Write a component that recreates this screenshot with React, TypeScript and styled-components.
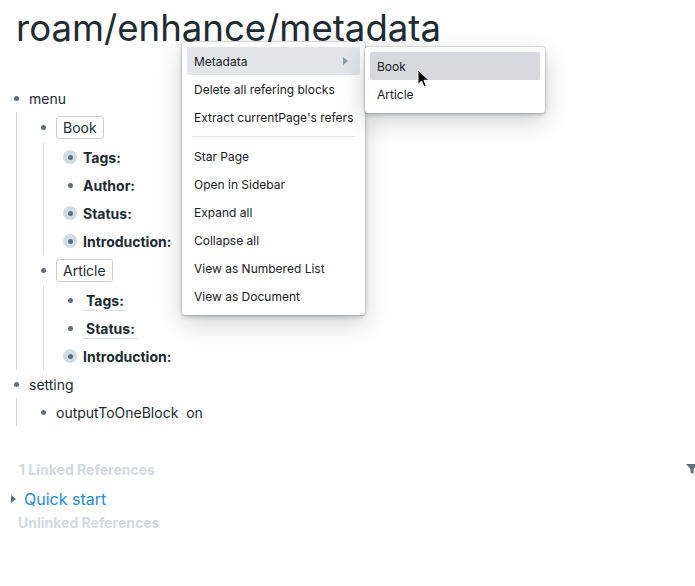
import React from "react";
import styled, { createGlobalStyle } from "styled-components";

const GlobalStyle = createGlobalStyle`
  html, body { margin: 0; padding: 0; background: #fff; }
  body {
    font-family: Inter, "Noto Sans", sans-serif;
    color: #202b33;
    overflow: hidden;
  }
  * { box-sizing: border-box; }
`;

const Page = styled.div`
  position: relative;
  width: 695px;
  height: 586px;
  overflow: hidden;
  padding: 7px 0 0 9px;
`;

const Title = styled.h1`
  margin: 0 0 34px 7px;
  font-size: 36.6px;
  line-height: 43px;
  font-weight: 400;
  color: #202b33;
`;

const Row = styled.div<{ $tall?: boolean }>`
  display: flex;
  align-items: center;
  height: ${(p) => (p.$tall ? 31 : 28)}px;
  font-size: 14px;
`;

const BulletBox = styled.span<{ $collapsed?: boolean }>`
  width: 14px;
  height: 14px;
  flex: none;
  display: flex;
  align-items: center;
  justify-content: center;
  margin-right: 6px;
  border-radius: 50%;
  background: ${(p) => (p.$collapsed ? "#d3dce4" : "transparent")};
`;

const Dot = styled.span`
  width: 5px;
  height: 5px;
  border-radius: 50%;
  background: #5c7080;
`;

const Children = styled.div`
  margin-left: 7px;
  border-left: 1px solid #ccd6de;
  padding-left: 19px;
`;

const Plain = styled.span`
  color: #202b33;
  white-space: pre;
`;

const Attr = styled.span`
  font-weight: 700;
  color: #202b33;
`;

const AttrRef = styled.span`
  font-weight: 700;
  color: #202b33;
  padding: 0 3px 1px;
  border-bottom: 1px solid #d8e1e8;
  margin-top: 2px;
`;

const Tag = styled.span`
  display: inline-flex;
  align-items: center;
  height: 23px;
  padding: 0 6px;
  border: 1px solid #c8ced4;
  border-radius: 3px;
  background: #fff;
  color: #202b33;
`;

type Kind = "plain" | "tag" | "attr" | "attrRef";
type BlockNode = {
  text: string;
  kind?: Kind;
  collapsed?: boolean;
  children?: BlockNode[];
};

const tree: BlockNode[] = [
  {
    text: "menu",
    children: [
      {
        text: "Book",
        kind: "tag",
        children: [
          { text: "Tags:", kind: "attr", collapsed: true },
          { text: "Author:", kind: "attr" },
          { text: "Status:", kind: "attr", collapsed: true },
          { text: "Introduction:", kind: "attr", collapsed: true },
        ],
      },
      {
        text: "Article",
        kind: "tag",
        children: [
          { text: "Tags:", kind: "attrRef" },
          { text: "Status:", kind: "attrRef" },
          { text: "Introduction:", kind: "attr", collapsed: true },
        ],
      },
    ],
  },
  {
    text: "setting",
    children: [{ text: "outputToOneBlock  on" }],
  },
];

const Content = ({ node }: { node: BlockNode }) => {
  switch (node.kind) {
    case "tag":
      return <Tag>{node.text}</Tag>;
    case "attr":
      return <Attr>{node.text}</Attr>;
    case "attrRef":
      return <AttrRef>{node.text}</AttrRef>;
    default:
      return <Plain>{node.text}</Plain>;
  }
};

const Block = ({ node }: { node: BlockNode }) => (
  <div>
    <Row $tall={node.kind === "tag"}>
      <BulletBox $collapsed={node.collapsed}>
        <Dot />
      </BulletBox>
      <Content node={node} />
    </Row>
    {node.children && (
      <Children>
        {node.children.map((c, i) => (
          <Block key={i} node={c} />
        ))}
      </Children>
    )}
  </div>
);

const RefSection = styled.div`
  margin-top: 33px;
`;

const RefHeader = styled.div<{ $pad?: number; $gap?: number }>`
  display: flex;
  justify-content: space-between;
  align-items: center;
  height: 20px;
  margin-top: ${(p) => p.$gap ?? 0}px;
  padding-left: ${(p) => p.$pad ?? 10}px;
  margin-right: -3px;
  font-size: 14px;
  font-weight: 700;
  color: #d0dae2;
`;

const PageRefRow = styled.div`
  display: flex;
  align-items: center;
  height: 22px;
  padding-left: 2px;
  margin-top: 9px;
`;

const Caret = styled.span`
  width: 0;
  height: 0;
  border-top: 4px solid transparent;
  border-bottom: 4px solid transparent;
  border-left: 5px solid #5c7080;
  margin-right: 8px;
`;

const PageLink = styled.span`
  font-size: 16px;
  color: #1b8af0;
`;

const Menu = styled.div<{ $left: number; $top: number; $width: number }>`
  position: absolute;
  left: ${(p) => p.$left}px;
  top: ${(p) => p.$top}px;
  width: ${(p) => p.$width}px;
  padding: 5px;
  background: #fff;
  border-radius: 3px;
  box-shadow: 0 0 0 1px rgba(16, 22, 26, 0.1), 0 2px 4px rgba(16, 22, 26, 0.2),
    0 8px 24px rgba(16, 22, 26, 0.2);
`;

const MenuItem = styled.div<{ $bg?: string }>`
  display: flex;
  align-items: center;
  justify-content: space-between;
  height: 28px;
  padding: 0 7px;
  border-radius: 2px;
  font-size: 12px;
  color: #182026;
  white-space: nowrap;
  background: ${(p) => p.$bg ?? "transparent"};
`;

const SubCaret = styled.span`
  width: 0;
  height: 0;
  border-top: 4px solid transparent;
  border-bottom: 4px solid transparent;
  border-left: 5px solid #8a9ba8;
  margin-right: 5px;
`;

const Divider = styled.div`
  height: 1px;
  margin: 5px;
  background: #e1e8ed;
`;

const Cursor = styled.svg`
  position: absolute;
  left: 417px;
  top: 69px;
`;

const FilterIcon = () => (
  <svg width="12" height="12" viewBox="0 0 12 12">
    <path d="M0 1h12L7.5 6v5L4.5 9.5V6z" fill="#5c7080" />
  </svg>
);

const menuItems = [
  "Delete all refering blocks",
  "Extract currentPage's refers",
];
const menuItems2 = [
  "Star Page",
  "Open in Sidebar",
  "Expand all",
  "Collapse all",
  "View as Numbered List",
  "View as Document",
];

export default function App() {
  return (
    <>
      <GlobalStyle />
      <Page>
        <Title>roam/enhance/metadata</Title>
        {tree.map((n, i) => (
          <Block key={i} node={n} />
        ))}
        <RefSection>
          <RefHeader>
            <span>1 Linked References</span>
            <FilterIcon />
          </RefHeader>
          <PageRefRow>
            <Caret />
            <PageLink>Quick start</PageLink>
          </PageRefRow>
          <RefHeader $pad={9} $gap={2}>
            <span>Unlinked References</span>
          </RefHeader>
        </RefSection>

        <Menu $left={182} $top={42} $width={183}>
          <MenuItem $bg="#e2e5e9">
            <span>Metadata</span>
            <SubCaret />
          </MenuItem>
          {menuItems.map((t) => (
            <MenuItem key={t}>{t}</MenuItem>
          ))}
          <Divider />
          {menuItems2.map((t) => (
            <MenuItem key={t}>{t}</MenuItem>
          ))}
        </Menu>
        <Menu $left={365} $top={47} $width={180}>
          <MenuItem $bg="#d5d8dc">Book</MenuItem>
          <MenuItem>Article</MenuItem>
        </Menu>
        <Cursor width="13" height="19" viewBox="0 0 13 19">
          <path
            d="M1 1v14.5l3.6-3.4 2.4 5.6 2.3-1-2.4-5.4H12z"
            fill="#000"
            stroke="#fff"
            strokeWidth="1"
            strokeLinejoin="round"
          />
        </Cursor>
      </Page>
    </>
  );
}
